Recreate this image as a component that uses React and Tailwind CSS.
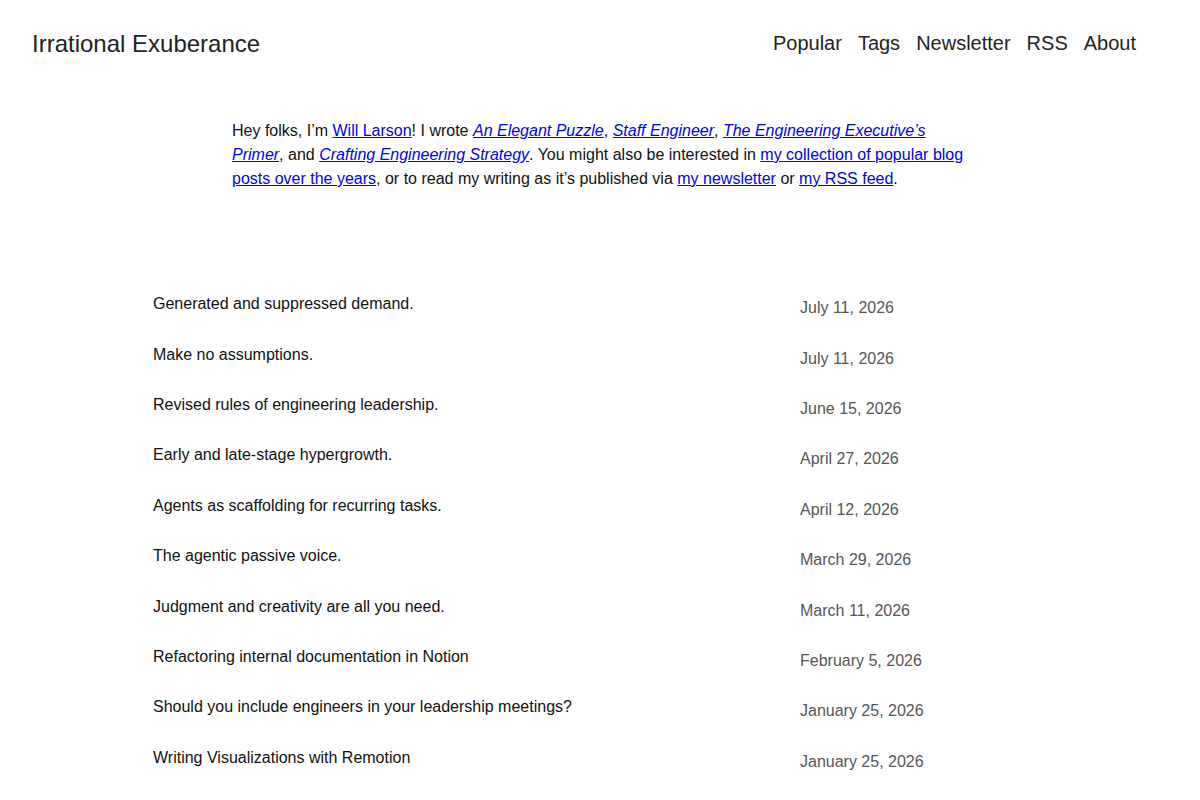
import React from "react";

const posts = [
  ["Generated and suppressed demand.", "July 11, 2026"],
  ["Make no assumptions.", "July 11, 2026"],
  ["Revised rules of engineering leadership.", "June 15, 2026"],
  ["Early and late-stage hypergrowth.", "April 27, 2026"],
  ["Agents as scaffolding for recurring tasks.", "April 12, 2026"],
  ["The agentic passive voice.", "March 29, 2026"],
  ["Judgment and creativity are all you need.", "March 11, 2026"],
  ["Refactoring internal documentation in Notion", "February 5, 2026"],
  ["Should you include engineers in your leadership meetings?", "January 25, 2026"],
  ["Writing Visualizations with Remotion", "January 25, 2026"],
];

const navItems = ["Popular", "Tags", "Newsletter", "RSS", "About"];

function A({ children, italic }) {
  return (
    <a href="#" className={italic ? "text-[#0000ee] underline italic" : "text-[#0000ee] underline"}>
      {children}
    </a>
  );
}

export default function App() {
  return (
    <div className="min-h-screen bg-white font-['Liberation_Sans',Arial,sans-serif] text-[#111]">
      <header className="flex items-start justify-between pl-8 pr-16 pt-[30px]">
        <a href="#" className="text-[24px] leading-[28px] text-[#222]">
          Irrational Exuberance
        </a>
        <nav className="flex items-start gap-4 pt-[0.5px]">
          {navItems.map((n) => (
            <a key={n} href="#" className="text-[20px] leading-[24px] text-[#222]">
              {n}
            </a>
          ))}
        </nav>
      </header>

      <p className="mx-auto mt-[61px] w-[736px] text-[16px] leading-[24px]">
        Hey folks, I’m <A>Will Larson</A>! I wrote <A italic>An Elegant Puzzle</A>,{" "}
        <A italic>Staff Engineer</A>, <A italic>The Engineering Executive’s Primer</A>, and{" "}
        <A italic>Crafting Engineering Strategy</A>. You might also be interested in{" "}
        <A>my collection of popular blog posts over the years</A>, or to read my writing as it’s
        published via <A>my newsletter</A> or <A>my RSS feed</A>.
      </p>

      <div className="mx-auto mt-[88px] w-[894px]">
        {posts.map(([title, date], i) => (
          <div
            key={i}
            className="grid h-[50.4px] grid-cols-[647px_1fr] items-start pt-[13.2px] text-[16px] leading-[24px]"
          >
            <a href="#" className="text-[#111]">
              {title}
            </a>
            <span className="pt-[4px] text-[#555]">{date}</span>
          </div>
        ))}
      </div>
    </div>
  );
}
